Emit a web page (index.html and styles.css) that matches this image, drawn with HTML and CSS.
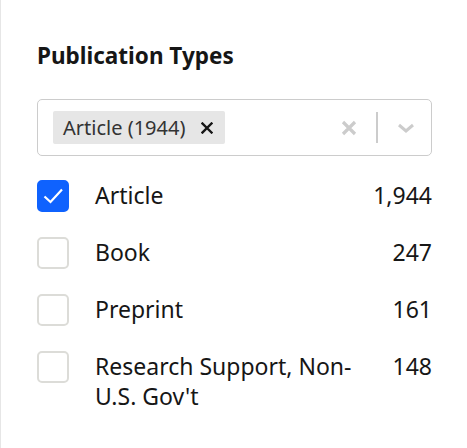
FILE: index.html
```html
<!DOCTYPE html>
<html>
<head>
<meta charset="utf-8">
<link rel="stylesheet" href="styles.css">
</head>
<body>
<div class="panel">
  <h2 class="title">Publication Types</h2>
  <div class="select">
    <div class="values">
      <span class="chip">Article (1944)
        <svg class="chip-x" width="12" height="12" viewBox="0 0 12 12"><path d="M1.5 1.5L10.5 10.5M10.5 1.5L1.5 10.5" stroke="#161616" stroke-width="2.4" stroke-linecap="square"/></svg>
      </span>
    </div>
    <div class="indicators">
      <svg class="clear" width="16" height="16" viewBox="0 0 16 16"><path d="M2 2L14 14M14 2L2 14" stroke="#cccccc" stroke-width="3.2"/></svg>
      <span class="sep"></span>
      <svg class="chev" width="18" height="10" viewBox="0 0 18 10"><path d="M2 2L9 8L16 2" fill="none" stroke="#cccccc" stroke-width="3"/></svg>
    </div>
  </div>
  <ul class="list">
    <li class="row">
      <span class="box checked"><svg width="24" height="24" viewBox="0 0 24 24"><path d="M3.5 12.5L9.5 18L21 5.5" fill="none" stroke="#ffffff" stroke-width="2.2"/></svg></span>
      <span class="label">Article</span>
      <span class="count">1,944</span>
    </li>
    <li class="row">
      <span class="box"></span>
      <span class="label">Book</span>
      <span class="count">247</span>
    </li>
    <li class="row">
      <span class="box"></span>
      <span class="label">Preprint</span>
      <span class="count">161</span>
    </li>
    <li class="row">
      <span class="box"></span>
      <span class="label">Research Support, Non-U.S. Gov't</span>
      <span class="count">148</span>
    </li>
  </ul>
</div>
</body>
</html>
```
FILE: styles.css
```css
html, body {
  margin: 0;
  padding: 0;
  background: #ffffff;
}
body {
  font-family: "Noto Sans", "Liberation Sans", sans-serif;
  color: #161616;
}
.panel {
  box-sizing: border-box;
  width: 467px;
  height: 448px;
  border-left: 1px solid #e6e6e6;
  padding: 38px 35px 0 36px;
}
.title {
  margin: 0;
  font-size: 22.5px;
  font-weight: 700;
  line-height: 36px;
}
.select {
  margin-top: 25px;
  box-sizing: border-box;
  height: 57px;
  border: 1px solid #cccccc;
  border-radius: 5px;
  display: flex;
  align-items: center;
  padding: 0 16px 0 15px;
}
.values {
  flex: 1;
  display: flex;
}
.chip {
  display: flex;
  align-items: center;
  height: 33px;
  background: #e6e6e6;
  border-radius: 2px;
  padding: 0 12px 0 10px;
  font-size: 20px;
  color: #333333;
}
.chip-x {
  margin-left: 16px;
}
.indicators {
  display: flex;
  align-items: center;
}
.sep {
  width: 2px;
  height: 31px;
  background: #cccccc;
  margin: 0 19px 0 19px;
}
.list {
  list-style: none;
  margin: 24px 0 0 0;
  padding: 0;
}
.row {
  display: flex;
  align-items: flex-start;
  margin-bottom: 25px;
}
.box {
  box-sizing: border-box;
  flex: none;
  width: 32px;
  height: 32px;
  border: 2.5px solid #dcdcd8;
  border-radius: 5px;
  display: flex;
  align-items: center;
  justify-content: center;
}
.box.checked {
  background: #0f62fe;
  border-color: #0f62fe;
}
.label {
  flex: 1;
  margin-left: 26px;
  margin-right: 24px;
  font-size: 23px;
  line-height: 30px;
}
.count {
  flex: none;
  font-size: 23px;
  line-height: 30px;
  text-align: right;
}
```
